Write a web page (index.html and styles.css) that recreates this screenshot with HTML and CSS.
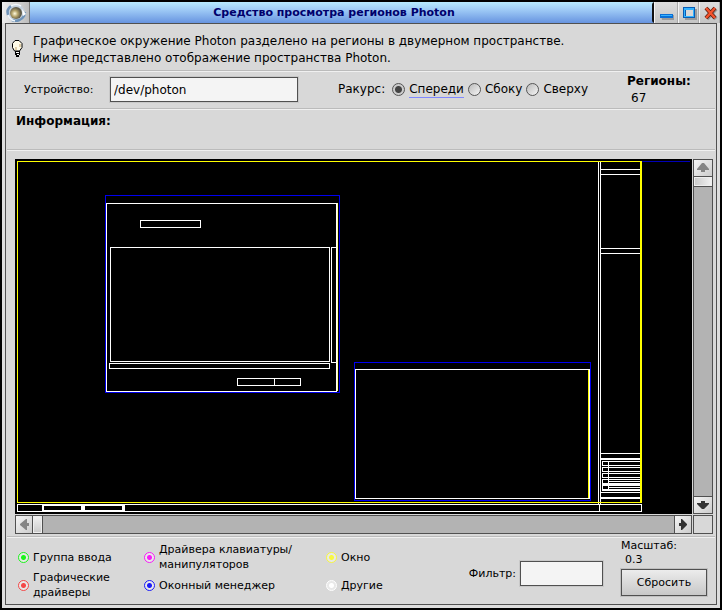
FILE: index.html
```html
<!DOCTYPE html>
<html lang="ru">
<head>
<meta charset="utf-8">
<title>Средство просмотра регионов Photon</title>
<link rel="stylesheet" href="styles.css">
</head>
<body>
<div class="window">
  <header class="titlebar">
    <button class="menu-button" type="button" aria-label="Меню окна">
      <svg width="24" height="20" viewBox="0 0 24 20">
        <defs><radialGradient id="orb" cx=".4" cy=".55"><stop offset="0" stop-color="#fffbe0"/><stop offset=".5" stop-color="#b5a46c"/><stop offset="1" stop-color="#5f5a48"/></radialGradient></defs>
        <circle cx="12" cy="10" r="9" fill="#c3cfdb"/>
        <path d="M4 12a8 8 0 0 1 3-9M8 17a9 8 0 0 0 12-4l1-4" fill="none" stroke="#6f93b8" stroke-width="2.500"/>
        <path d="M7 3a9 8 0 0 1 10 0M4 12q2 5 7 6" fill="none" stroke="#f1f6fa" stroke-width="1.500"/>
        <circle cx="12" cy="10" r="6" fill="url(#orb)"/>
        <path d="M18 6l1 7 3-2z" fill="#fff"/>
      </svg>
    </button>
    <h1 class="title">Средство просмотра регионов Photon</h1>
    <div class="controls">
      <button class="control" type="button" aria-label="Свернуть"><svg width="21" height="20"><path d="M5 12h13v5H6" fill="#9a9a9a"/><path d="M4 11h13v4H4z" fill="#0a6fd6"/><path d="M5 12h11v1H5z" fill="#35b4ff"/></svg></button>
      <button class="control" type="button" aria-label="Развернуть"><svg width="21" height="20"><path d="M6 6h12v11H6z" fill="#9a9a9a"/><path d="M4 4h12v11H4z" fill="#075cb5"/><path d="M5 5h10v9H5z" fill="#35b4ff"/><path d="M6 7h8v6H6z" fill="#075cb5"/><path d="M7 7h7v6H7z" fill="#d8d8d8"/></svg></button>
      <button class="control" type="button" aria-label="Закрыть"><svg width="21" height="20"><path d="M7 6l9 10M16 6L7 16" stroke="#999" stroke-width="4"/><path d="M6 5l9 10M15 5L6 15" stroke="#5e1d10" stroke-width="4"/><path d="M6 5l9 10M15 5L6 15" stroke="#f4532c" stroke-width="2.500"/></svg></button>
    </div>
  </header>
  <main class="content">
    <section class="intro">
      <svg class="bulb" width="13" height="19" viewBox="0 0 13 19">
        <path d="M4 1.500h4l3 3v4l-2.500 3.500h-5L1.500 8.500v-4z" fill="#fffbe8" stroke="#000"/>
        <path d="M4 8h2v3H4zM8 5h2v3H8z" fill="#e2cfa8"/>
        <path d="M4 12h5v4H8v2H5v-2H4z" fill="#000"/><path d="M5 13h3v1H5zM6 15h2v1H6z" fill="#fff"/>
      </svg>
      <p>Графическое окружение Photon разделено на регионы в двумерном пространстве.<br>Ниже представлено отображение пространства Photon.</p>
    </section>
    <section class="settings">
      <label class="device-label" for="device">Устройство:</label>
      <input class="field device" id="device" type="text" value="/dev/photon">
      <fieldset class="views">
        <legend class="hidden-legend">Ракурс</legend>
        <span class="views-label">Ракурс:</span>
        <label class="view"><input type="radio" name="view" checked><span>Спереди</span></label>
        <label class="view"><input type="radio" name="view"><span>Сбоку</span></label>
        <label class="view"><input type="radio" name="view"><span>Сверху</span></label>
      </fieldset>
      <div class="count"><strong>Регионы:</strong><output>67</output></div>
    </section>
    <section class="info"><strong>Информация:</strong></section>
    <section class="viewer">
      <div class="canvas">
        <svg width="677" height="355" viewBox="15 159 677 355" shape-rendering="crispEdges">
          <path d="M642 161.500h48" stroke="#0000b8"/>
          <g fill="none" stroke="#00e">
            <path d="M105.500 195.500h234v197h-234z"/>
            <path d="M354.500 362.500h236v138h-236z"/>
          </g>
          <g fill="none" stroke="#fff">
            <path d="M106.500 203.500h230v188h-230z"/>
            <path d="M140.500 220.500h60v7h-60zM110.500 247.500h219v114h-219zM331.500 247.500h5v115h-5zM109.500 363.500h220v5h-220zM237.500 378.500h63v7h-63zM274.500 378v8"/>
            <path d="M355.500 369.500h234v129h-234z"/>
            <path d="M598.500 162v342M600.500 162v342M601 169.500h39M601 174.500h39M601 248.500h39M601 253.500h39M601 453.500h39"/>
            <path d="M601 459h39M601 498h39" stroke-width="2"/>
            <path d="M602.500 461.500h38v4h-38zM602.500 467.500h38v4h-38zM602.500 473.500h38v4h-38zM602.500 479.500h38v4h-38zM602.500 485.500h38v4h-38zM608.500 461v29M601 492.500h39"/>
            <path d="M17.500 504.500h624v7h-624zM599.500 504v8"/>
          </g>
          <path d="M602 484h39v1h-39zM608 479h33v12h-33zM602 490h39v1h-39z" fill="#fff"/>
          <path d="M609 480h32v1h-32zM609 482h32v1h-32zM609 486h32v1h-32zM609 488h32v1h-32z"/>
          <path d="M42 504h83v8H42z" fill="#fff"/>
          <path d="M44 506h37v4H44zM85 506h37v4H85z"/>
          <g fill="none" stroke="#ff0">
            <path d="M641 161.500H17.500V502.500H641"/>
            <path d="M641 161v342" stroke-width="2"/>
            <path d="M588.500 370v128"/>
            <path d="M337.500 203v188" stroke="#ffffa0"/>
          </g>
        </svg>
      </div>
      <div class="scroll vertical">
        <button class="arrow" type="button" aria-label="Вверх" disabled><svg width="18" height="16"><path d="M8 3h2l5 6v1h-4v2H7v-2H3V9z" fill="#858585"/></svg></button>
        <span class="thumb"></span>
        <button class="arrow end" type="button" aria-label="Вниз"><svg width="18" height="16"><path d="M8 12h2l5-5V6h-4V4H7v2H3v1z" fill="#333"/></svg></button>
      </div>
      <div class="scroll horizontal">
        <button class="arrow" type="button" aria-label="Влево" disabled><svg width="16" height="17"><path d="M4 8v1l6 5h1v-4h2V7h-2V3h-1z" fill="#858585"/></svg></button>
        <span class="thumb"></span>
        <button class="arrow end" type="button" aria-label="Вправо"><svg width="16" height="17"><path d="M12 8v1l-5 5H6v-4H4V7h2V3h1z" fill="#333"/></svg></button>
      </div>
      <div class="corner"></div>
    </section>
    <footer class="bottom">
      <ul class="legend">
        <li class="green"><i class="dot"></i><span>Группа ввода</span></li>
        <li class="magenta"><i class="dot"></i><span>Драйвера клавиатуры/<br>манипуляторов</span></li>
        <li class="yellow"><i class="dot"></i><span>Окно</span></li>
        <li class="red"><i class="dot"></i><span>Графические<br>драйверы</span></li>
        <li class="blue"><i class="dot"></i><span>Оконный менеджер</span></li>
        <li class="white"><i class="dot"></i><span>Другие</span></li>
      </ul>
      <div class="filter"><label for="filter">Фильтр:</label><input class="field" id="filter" type="text"></div>
      <div class="zoom"><span>Масштаб:</span><output>0.3</output><button class="reset" type="button">Сбросить</button></div>
    </footer>
  </main>
</div>
</body>
</html>
```
FILE: styles.css
```css
* { box-sizing: border-box; }
body {
  margin: 0;
  height: 100vh;
  background: #000;
  color: #000;
  font: 12px/17px "DejaVu Sans", sans-serif;
}
button, input { font: inherit; color: inherit; margin: 0; padding: 0; border: 0; }
button svg { display: block; }
p, h1, ul, fieldset { margin: 0; padding: 0; border: 0; }
.window {
  display: flex;
  flex-direction: column;
  height: 100vh;
  padding: 2px;
  border-bottom: 1px solid #000;
}
.titlebar {
  display: flex;
  height: 21px;
  background: linear-gradient(#b8eaff, #9cc8f5 40%, #6794e0);
}
.menu-button { width: 28px; padding-left: 2px; background: linear-gradient(90deg, #eee, #bcbcbc); border-right: 1px solid #777; }
.title {
  flex: 1;
  padding-right: 14px;
  text-align: center;
  font-size: 11px;
  line-height: 22px;
  color: #00006c;
}
.controls { display: flex; border-left: 2px solid #111; border-radius: 3px 0 0 3px; background: #d8d8d8; }
.control { width: 21px; background: linear-gradient(#ddd, #c4c4c4); border-left: 1px solid #f4f4f4; border-right: 1px solid #aaa; }
.control:first-child { width: 24px; padding-left: 1px; }
.content {
  flex: 1;
  display: flex;
  flex-direction: column;
  padding: 0 1px;
  background: #d8d8d8;
  border: 1px solid #505050;
  outline: 3px solid #ddd;
  margin: 0 3px 3px;
  clip-path: inset(0 -3px -3px -3px);
}
.intro, .settings, .info, .viewer { border-bottom: 1px solid #bbb; box-shadow: 0 1px #f0f0f0; }
.intro { display: flex; height: 47px; padding: 9px 0 0 4px; gap: 9px; }
.bulb { margin-top: 6px; }
.settings { display: flex; align-items: center; height: 38px; padding-left: 17px; }
.field { height: 25px; background: #f4f4f4; border: 1px solid #505050; padding: 0 3px; outline: 1px solid #c8c8c8; border-radius: 0; }
.device-label { width: 86px; font-size: 11px; }
.device { width: 188px; }
.views { display: flex; align-items: center; margin-left: 40px; min-width: 0; }
.hidden-legend { display: none; }
.views-label { margin-right: 7px; }
.view { display: flex; align-items: center; gap: 4px; margin-right: 4px; }
.view input {
  appearance: none;
  width: 13px;
  height: 13px;
  border: 1px solid #555;
  border-radius: 50%;
  background: linear-gradient(135deg, #bbb, #f5f5f5);
}
.view input:checked { background: radial-gradient(circle, #444 0 3px, #ccc 4px); }
.view span { border-bottom: 1px solid transparent; line-height: 15px; }
.view input:checked + span { border-color: #8088ff; }
.count { display: flex; flex-direction: column; width: 88px; margin-left: auto; }
.count output { padding-left: 4px; }
.info { height: 41px; padding: 4px 0 0 9px; }
.viewer {
  flex: 1;
  display: grid;
  grid-template-columns: 1fr 20px;
  grid-template-rows: 1fr 19px;
  gap: 1px;
  padding: 9px 2px 2px 8px;
  min-height: 0;
}
.canvas { background: #000; overflow: hidden; min-width: 0; min-height: 0; }
.canvas svg { display: block; }
.scroll { display: flex; background: #b3b3b3; border: 1px solid #505050; }
.vertical { flex-direction: column; }
.arrow { background: linear-gradient(135deg, #f4f4f4, #ccc); }
.vertical .arrow { height: 17px; border-bottom: 1px solid #505050; }
.vertical .end { border-bottom: 0; border-top: 1px solid #505050; }
.horizontal .arrow { width: 17px; border-right: 1px solid #505050; }
.horizontal .end { border-right: 0; border-left: 1px solid #505050; }
.end { margin: auto 0 0; }
.horizontal .end { margin: 0 0 0 auto; }
.thumb { background: linear-gradient(90deg, #ccc, #f0f0f0); border: 1px solid #eee; }
.vertical .thumb { height: 9px; box-shadow: 0 1px #505050; }
.horizontal .thumb { width: 9px; background: linear-gradient(#f0f0f0, #ccc); box-shadow: 1px 0 #505050; }
.corner { border: 1px solid #505050; }
.bottom { display: flex; height: 67px; font-size: 11px; line-height: 15px; }
.legend {
  list-style: none;
  display: grid;
  grid-template-columns: 126px 182px auto;
  grid-template-rows: 28px 28px;
  padding: 6px 0 0 11px;
}
.legend li { display: flex; align-items: center; gap: 4px; white-space: nowrap; }
.dot {
  width: 11px;
  height: 11px;
  border: 1px solid currentColor;
  border-radius: 50%;
  background: radial-gradient(circle, currentColor 0 2px, #e8e8e8 3px);
}
.legend span { color: #000; }
.green { color: #1cf41c; }
.magenta { color: #f81cf8; }
.yellow { color: #f8f840; }
.red { color: #f44848; }
.blue { color: #1c1cf8; }
.white { color: #fff; }
.filter { display: flex; align-items: center; gap: 4px; margin-left: auto; padding-top: 5px; }
.filter .field { width: 83px; }
.zoom { display: flex; flex-direction: column; width: 94px; margin-left: 18px; padding: 2px 8px 0 0; line-height: 14px; }
.zoom output { padding-left: 4px; }
.reset { height: 27px; margin-top: 2px; border: 1px solid #505050; background: linear-gradient(#ececec, #c8c8c8); outline: 1px solid #c0c0c0; }
```
